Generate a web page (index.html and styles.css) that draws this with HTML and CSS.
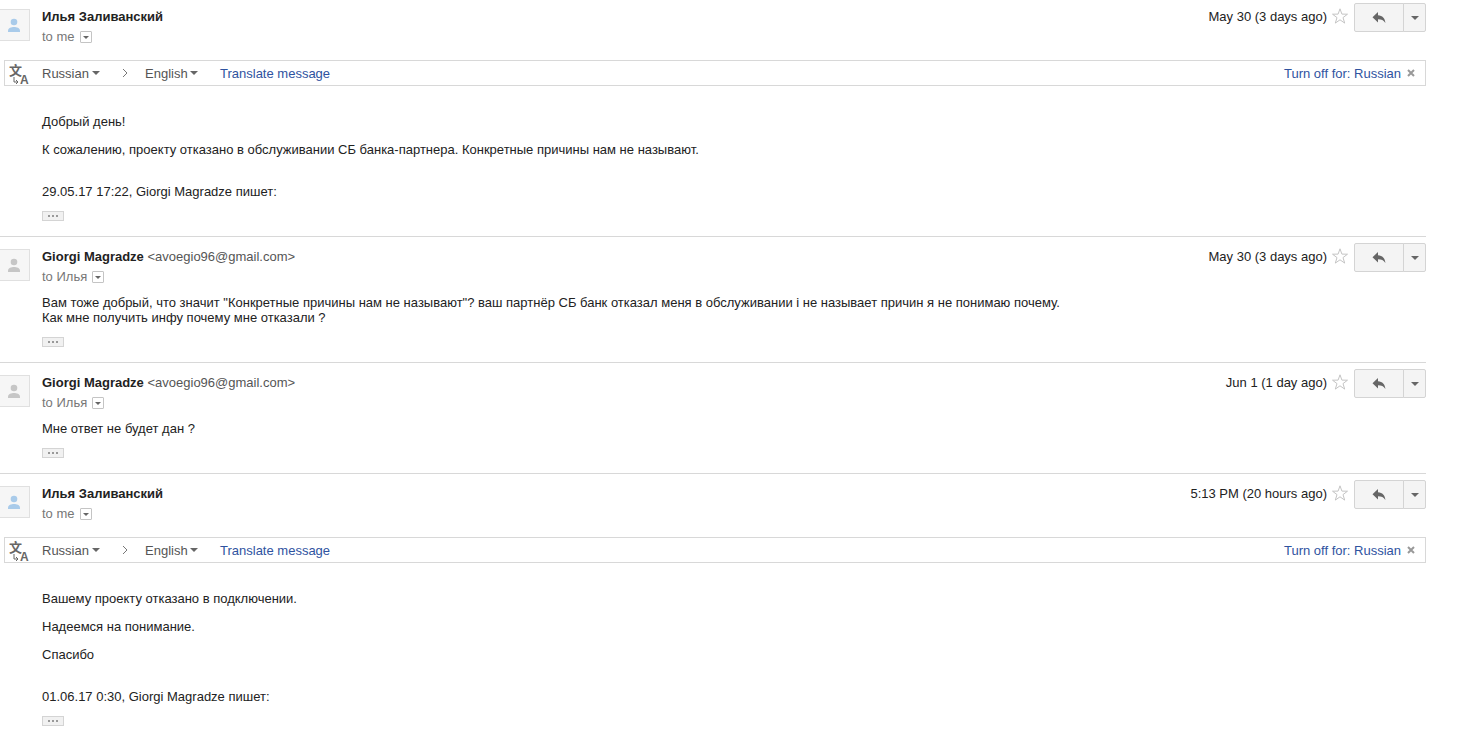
FILE: index.html
```html
<!DOCTYPE html>
<html lang="en">
<head>
    <meta charset="UTF-8">
    <meta name="viewport" content="width=device-width, initial-scale=1.0">
    <title>Conversation</title>
    <link rel="stylesheet" href="styles.css">
</head>
<body>

<!-- Shared icons -->
<svg class="sprite" aria-hidden="true">
    <symbol id="icon-person" viewBox="0 0 14 14">
        <circle cx="7" cy="4" r="3.3"/>
        <path d="M1 14v-1.500C1 10 4.500 9 7 9s6 1 6 3.500V14z"/>
    </symbol>
    <symbol id="icon-star" viewBox="0 0 16 16">
        <path d="M8 .8l1.900 5.300 5.600.1-4.500 3.400 1.700 5.500L8 11.800l-4.700 3.300 1.700-5.500L.5 6.200l5.600-.1z"/>
    </symbol>
    <symbol id="icon-reply" viewBox="0 0 14 12">
        <path d="M6 0v3.200c4.500.3 7 3 7.400 7.800C11.600 8.300 9.500 7.300 6 7.300v3.200L.5 5.300z"/>
    </symbol>
</svg>

<main class="thread">
    <article class="message">
        <header class="message-header">
            <div class="avatar contact"><svg><use href="#icon-person"/></svg></div>
            <div class="sender">
                <div class="from"><b>Илья Заливанский</b></div>
                <div class="to">to me <button class="details" aria-label="Show details"></button></div>
            </div>
            <div class="date">May 30 (3 days ago)</div>
            <button class="star" aria-label="Star"><svg><use href="#icon-star"/></svg></button>
            <div class="actions">
                <button class="reply" aria-label="Reply"><svg><use href="#icon-reply"/></svg></button>
                <button class="more" aria-label="More"></button>
            </div>
        </header>
        <div class="translate">
            <svg class="translate-icon" viewBox="0 0 22 24" aria-hidden="true">
                <text class="han" x="0" y="14">文</text>
                <text class="latin" x="11" y="23">A</text>
                <path d="M5 16v5h4M7 19l2 2-2 2"/>
            </svg>
            <label class="language from-language"><select aria-label="From language"><option>Russian</option></select></label>
            <svg class="chevron" viewBox="0 0 6 10" aria-hidden="true"><path d="M1 1l4 4-4 4"/></svg>
            <label class="language to-language"><select aria-label="To language"><option>English</option></select></label>
            <a class="translate-link" href="#">Translate message</a>
            <a class="turn-off" href="#">Turn off for: Russian</a>
            <button class="close" aria-label="Close"><svg viewBox="0 0 8 8"><path d="M1 1l6 6M7 1L1 7"/></svg></button>
        </div>
        <div class="message-body translated">
            <p>Добрый день!</p>
            <p>К сожалению, проекту отказано в обслуживании СБ банка-партнера. Конкретные причины нам не называют.</p>
            <div class="quote-head">29.05.17 17:22, Giorgi Magradze пишет:</div>
            <button class="trimmed" aria-label="Show trimmed content"><i></i><i></i><i></i></button>
        </div>
    </article>

    <article class="message">
        <header class="message-header">
            <div class="avatar"><svg><use href="#icon-person"/></svg></div>
            <div class="sender">
                <div class="from"><b>Giorgi Magradze</b> <span class="email">&lt;avoegio96@gmail.com&gt;</span></div>
                <div class="to">to Илья <button class="details" aria-label="Show details"></button></div>
            </div>
            <div class="date">May 30 (3 days ago)</div>
            <button class="star" aria-label="Star"><svg><use href="#icon-star"/></svg></button>
            <div class="actions">
                <button class="reply" aria-label="Reply"><svg><use href="#icon-reply"/></svg></button>
                <button class="more" aria-label="More"></button>
            </div>
        </header>
        <div class="message-body">
            <div>Вам тоже добрый, что значит "Конкретные причины нам не называют"? ваш партнёр СБ банк отказал меня в обслуживании і не называет причин я не понимаю почему.</div>
            <div>Как мне получить инфу почему мне отказали ?</div>
            <button class="trimmed" aria-label="Show trimmed content"><i></i><i></i><i></i></button>
        </div>
    </article>

    <article class="message">
        <header class="message-header">
            <div class="avatar"><svg><use href="#icon-person"/></svg></div>
            <div class="sender">
                <div class="from"><b>Giorgi Magradze</b> <span class="email">&lt;avoegio96@gmail.com&gt;</span></div>
                <div class="to">to Илья <button class="details" aria-label="Show details"></button></div>
            </div>
            <div class="date">Jun 1 (1 day ago)</div>
            <button class="star" aria-label="Star"><svg><use href="#icon-star"/></svg></button>
            <div class="actions">
                <button class="reply" aria-label="Reply"><svg><use href="#icon-reply"/></svg></button>
                <button class="more" aria-label="More"></button>
            </div>
        </header>
        <div class="message-body">
            <div>Мне ответ не будет дан ?</div>
            <button class="trimmed" aria-label="Show trimmed content"><i></i><i></i><i></i></button>
        </div>
    </article>

    <article class="message">
        <header class="message-header">
            <div class="avatar contact"><svg><use href="#icon-person"/></svg></div>
            <div class="sender">
                <div class="from"><b>Илья Заливанский</b></div>
                <div class="to">to me <button class="details" aria-label="Show details"></button></div>
            </div>
            <div class="date">5:13 PM (20 hours ago)</div>
            <button class="star" aria-label="Star"><svg><use href="#icon-star"/></svg></button>
            <div class="actions">
                <button class="reply" aria-label="Reply"><svg><use href="#icon-reply"/></svg></button>
                <button class="more" aria-label="More"></button>
            </div>
        </header>
        <div class="translate">
            <svg class="translate-icon" viewBox="0 0 22 24" aria-hidden="true">
                <text class="han" x="0" y="14">文</text>
                <text class="latin" x="11" y="23">A</text>
                <path d="M5 16v5h4M7 19l2 2-2 2"/>
            </svg>
            <label class="language from-language"><select aria-label="From language"><option>Russian</option></select></label>
            <svg class="chevron" viewBox="0 0 6 10" aria-hidden="true"><path d="M1 1l4 4-4 4"/></svg>
            <label class="language to-language"><select aria-label="To language"><option>English</option></select></label>
            <a class="translate-link" href="#">Translate message</a>
            <a class="turn-off" href="#">Turn off for: Russian</a>
            <button class="close" aria-label="Close"><svg viewBox="0 0 8 8"><path d="M1 1l6 6M7 1L1 7"/></svg></button>
        </div>
        <div class="message-body translated">
            <p>Вашему проекту отказано в подключении.</p>
            <p>Надеемся на понимание.</p>
            <p>Спасибо</p>
            <div class="quote-head">01.06.17 0:30, Giorgi Magradze пишет:</div>
            <button class="trimmed" aria-label="Show trimmed content"><i></i><i></i><i></i></button>
        </div>
    </article>
</main>

</body>
</html>
```
FILE: styles.css
```css
body {
    margin: 0;
    background-color: #ffffff;
    color: #222222;
    font-family: "Liberation Sans", Arial, sans-serif;
    font-size: 13px;
    line-height: 15px;
}
button {
    box-sizing: border-box;
    margin: 0;
    padding: 0;
    border: none;
    background: none;
    cursor: pointer;
}
a {
    color: #2f539f;
    text-decoration: none;
}
a:hover {
    text-decoration: underline;
}
.sprite {
    display: none;
}
.thread {
    margin-right: 33px;
}
.message {
    padding: 6px 0 15px;
    border-top: 1px solid #d8d8d8;
}
.message:first-child {
    padding-top: 3px;
    border-top: none;
}

/* Message header */
.message-header {
    display: flex;
    align-items: flex-start;
}
.avatar {
    box-sizing: border-box;
    display: flex;
    width: 30px;
    height: 32px;
    margin-top: 6px;
    padding: 8px 7px;
    border: 1px solid #e0e0e0;
    border-left: none;
    background-color: #f6f6f6;
    fill: #c6c6c6;
}
.avatar svg {
    width: 14px;
    height: 14px;
}
.avatar.contact {
    fill: #a9cbea;
}
.sender {
    flex: 1;
    margin: 4px 0 0 12px;
    line-height: 20px;
}
.email {
    color: #555555;
}
.to {
    display: flex;
    align-items: center;
    gap: 5px;
    height: 20px;
    color: #777777;
}
.details {
    display: flex;
    align-items: center;
    justify-content: center;
    width: 12px;
    height: 12px;
    border: 1px solid #c4c4c4;
    border-radius: 1px;
}
.details::after,
.more::after,
.language::after {
    content: "";
    border: 3px solid transparent;
    border-top-color: #666666;
    border-bottom: none;
}
.date {
    margin-top: 4px;
    line-height: 20px;
}
.star {
    width: 16px;
    height: 16px;
    margin: 5px 6px 0 5px;
}
.star svg {
    display: block;
    width: 16px;
    height: 16px;
    fill: none;
    stroke: #c4c4c4;
}
.actions {
    display: flex;
    height: 29px;
}
.reply,
.more {
    display: flex;
    align-items: center;
    justify-content: center;
    border: 1px solid #d4d4d4;
    background-color: #f4f4f4;
}
.reply {
    width: 50px;
    border-radius: 2px 0 0 2px;
}
.reply svg {
    width: 14px;
    height: 12px;
    fill: #666666;
}
.more {
    width: 23px;
    margin-left: -1px;
    border-radius: 0 2px 2px 0;
}
.more::after {
    border-width: 4px 4px 0;
}

/* Translate bar */
.translate {
    box-sizing: border-box;
    display: flex;
    align-items: center;
    height: 26px;
    margin: 13px 0 0 4px;
    padding: 0 10px 0 4px;
    border: 1px solid #d8d8d8;
    color: #555555;
}
.translate-icon {
    overflow: visible;
    width: 22px;
    height: 24px;
    margin-right: 11px;
    fill: #666666;
}
.translate-icon path {
    fill: none;
    stroke: #666666;
}
.han {
    font: bold 13px "Noto Sans CJK SC", sans-serif;
}
.latin {
    font: bold 12px "Liberation Sans", Arial, sans-serif;
}
.language {
    position: relative;
}
.language select {
    appearance: none;
    display: block;
    width: 100%;
    margin: 0;
    padding: 0;
    border: none;
    background: none;
    color: #555555;
    font: inherit;
}
.from-language {
    width: 58px;
}
.to-language {
    width: 53px;
}
.language::after {
    position: absolute;
    top: 5px;
    right: 0;
    border-width: 4px 4px 0;
    pointer-events: none;
}
.chevron {
    width: 6px;
    height: 10px;
    margin: 0 17px 0 22px;
    fill: none;
    stroke: #777777;
}
.translate-link {
    margin-left: 22px;
}
.turn-off {
    margin-left: auto;
}
.close {
    width: 8px;
    height: 8px;
    margin-left: 6px;
}
.close svg {
    display: block;
    fill: none;
    stroke: #999999;
    stroke-width: 2;
}

/* Message text */
.message-body {
    margin: 8px 0 0 42px;
}
.message-body.translated {
    margin-top: 28px;
}
.message-body p {
    margin: 0 0 13px;
}
.quote-head {
    padding-top: 14px;
}
.trimmed {
    display: flex;
    align-items: center;
    justify-content: center;
    gap: 2px;
    width: 22px;
    height: 10px;
    margin-top: 12px;
    border: 1px solid #d4d4d4;
    background-color: #f1f1f1;
}
.trimmed i {
    width: 2px;
    height: 2px;
    background-color: #999999;
}
```
